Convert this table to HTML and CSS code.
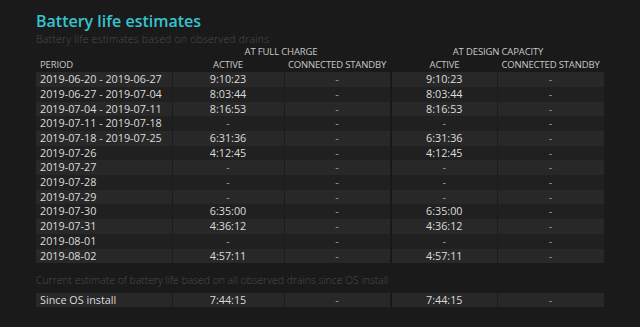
FILE: index.html
```html
<!DOCTYPE html>
<html>
<head>
<meta charset="utf-8">
<link rel="stylesheet" href="styles.css">
</head>
<body>
<div class="page">
  <h1 class="title">Battery life estimates</h1>
  <p class="subtitle">Battery life estimates based on observed drains</p>
  <table class="grid">
    <colgroup>
      <col class="c-period"><col class="c-active"><col class="c-standby"><col class="c-sep"><col class="c-active2"><col class="c-standby2">
    </colgroup>
    <thead>
      <tr class="group">
        <th></th>
        <th colspan="2">AT FULL CHARGE</th>
        <th></th>
        <th colspan="2">AT DESIGN CAPACITY</th>
      </tr>
      <tr class="heads">
        <th class="left">PERIOD</th>
        <th>ACTIVE</th>
        <th>CONNECTED STANDBY</th>
        <th class="sep"></th>
        <th>ACTIVE</th>
        <th>CONNECTED STANDBY</th>
      </tr>
    </thead>
    <tbody>
      <tr class="odd"><td class="left">2019-06-20 - 2019-06-27</td><td>9:10:23</td><td class="dash">-</td><td class="sep"></td><td>9:10:23</td><td class="dash">-</td></tr>
      <tr class="even"><td class="left">2019-06-27 - 2019-07-04</td><td>8:03:44</td><td class="dash">-</td><td class="sep"></td><td>8:03:44</td><td class="dash">-</td></tr>
      <tr class="odd"><td class="left">2019-07-04 - 2019-07-11</td><td>8:16:53</td><td class="dash">-</td><td class="sep"></td><td>8:16:53</td><td class="dash">-</td></tr>
      <tr class="even"><td class="left">2019-07-11 - 2019-07-18</td><td class="dash">-</td><td class="dash">-</td><td class="sep"></td><td class="dash">-</td><td class="dash">-</td></tr>
      <tr class="odd"><td class="left">2019-07-18 - 2019-07-25</td><td>6:31:36</td><td class="dash">-</td><td class="sep"></td><td>6:31:36</td><td class="dash">-</td></tr>
      <tr class="even"><td class="left">2019-07-26</td><td>4:12:45</td><td class="dash">-</td><td class="sep"></td><td>4:12:45</td><td class="dash">-</td></tr>
      <tr class="odd"><td class="left">2019-07-27</td><td class="dash">-</td><td class="dash">-</td><td class="sep"></td><td class="dash">-</td><td class="dash">-</td></tr>
      <tr class="even"><td class="left">2019-07-28</td><td class="dash">-</td><td class="dash">-</td><td class="sep"></td><td class="dash">-</td><td class="dash">-</td></tr>
      <tr class="odd"><td class="left">2019-07-29</td><td class="dash">-</td><td class="dash">-</td><td class="sep"></td><td class="dash">-</td><td class="dash">-</td></tr>
      <tr class="even"><td class="left">2019-07-30</td><td>6:35:00</td><td class="dash">-</td><td class="sep"></td><td>6:35:00</td><td class="dash">-</td></tr>
      <tr class="odd"><td class="left">2019-07-31</td><td>4:36:12</td><td class="dash">-</td><td class="sep"></td><td>4:36:12</td><td class="dash">-</td></tr>
      <tr class="even"><td class="left">2019-08-01</td><td class="dash">-</td><td class="dash">-</td><td class="sep"></td><td class="dash">-</td><td class="dash">-</td></tr>
      <tr class="odd"><td class="left">2019-08-02</td><td>4:57:11</td><td class="dash">-</td><td class="sep"></td><td>4:57:11</td><td class="dash">-</td></tr>
    </tbody>
  </table>
  <p class="note">Current estimate of battery life based on all observed drains since OS install</p>
  <table class="grid">
    <colgroup>
      <col class="c-period"><col class="c-active"><col class="c-standby"><col class="c-sep"><col class="c-active2"><col class="c-standby2">
    </colgroup>
    <tbody>
      <tr class="odd"><td class="left">Since OS install</td><td>7:44:15</td><td class="dash">-</td><td class="sep"></td><td>7:44:15</td><td class="dash">-</td></tr>
    </tbody>
  </table>
</div>
</body>
</html>
```
FILE: styles.css
```css
html, body {
  margin: 0;
  padding: 0;
  background: #1a1a1a;
}
.page {
  padding: 10px 0 0 36px;
  font-family: "Open Sans", "Noto Sans", sans-serif;
  color: #dcdcdc;
}
.title {
  margin: 0;
  font-size: 16px;
  line-height: 22px;
  font-weight: 600;
  color: #35c4cf;
}
.subtitle {
  margin: 0;
  font-size: 10.5px;
  line-height: 14.3px;
  letter-spacing: 0.2px;
  font-weight: 300;
  color: #4c4c4c;
}
.grid {
  border-collapse: collapse;
  table-layout: fixed;
  width: 568px;
  font-size: 10.8px;
}
.c-period { width: 136px; }
.c-active { width: 112px; }
.c-standby { width: 106px; }
.c-sep { width: 2px; }
.c-active2 { width: 105px; }
.c-standby2 { width: 107px; }
.grid th, .grid td {
  padding: 0;
  text-align: center;
  white-space: nowrap;
  overflow: hidden;
}
.grid th {
  font-weight: 400;
  font-size: 9.5px;
  letter-spacing: -0.15px;
  color: #c8c8c8;
}
.grid .group th,
.grid .heads th {
  height: 12.9px;
  line-height: 12.9px;
}
.grid td {
  height: 14.7px;
  line-height: 14.7px;
  border-right: 1px solid #1c1c1c;
  font-weight: 500;
}
.grid .left {
  text-align: left;
  padding-left: 4px;
}
.grid td.dash {
  color: #a0a0a0;
}
.grid .sep {
  border-right: 0;
}
.grid tr.odd td {
  background: #282828;
}
.grid tr.even td {
  background: #202020;
}
.grid tr td.sep {
  background: #161616;
}
.note {
  margin: 10px 0 5px 0;
  font-size: 10.5px;
  line-height: 14.3px;
  letter-spacing: -0.05px;
  font-weight: 300;
  color: #4c4c4c;
}
```
